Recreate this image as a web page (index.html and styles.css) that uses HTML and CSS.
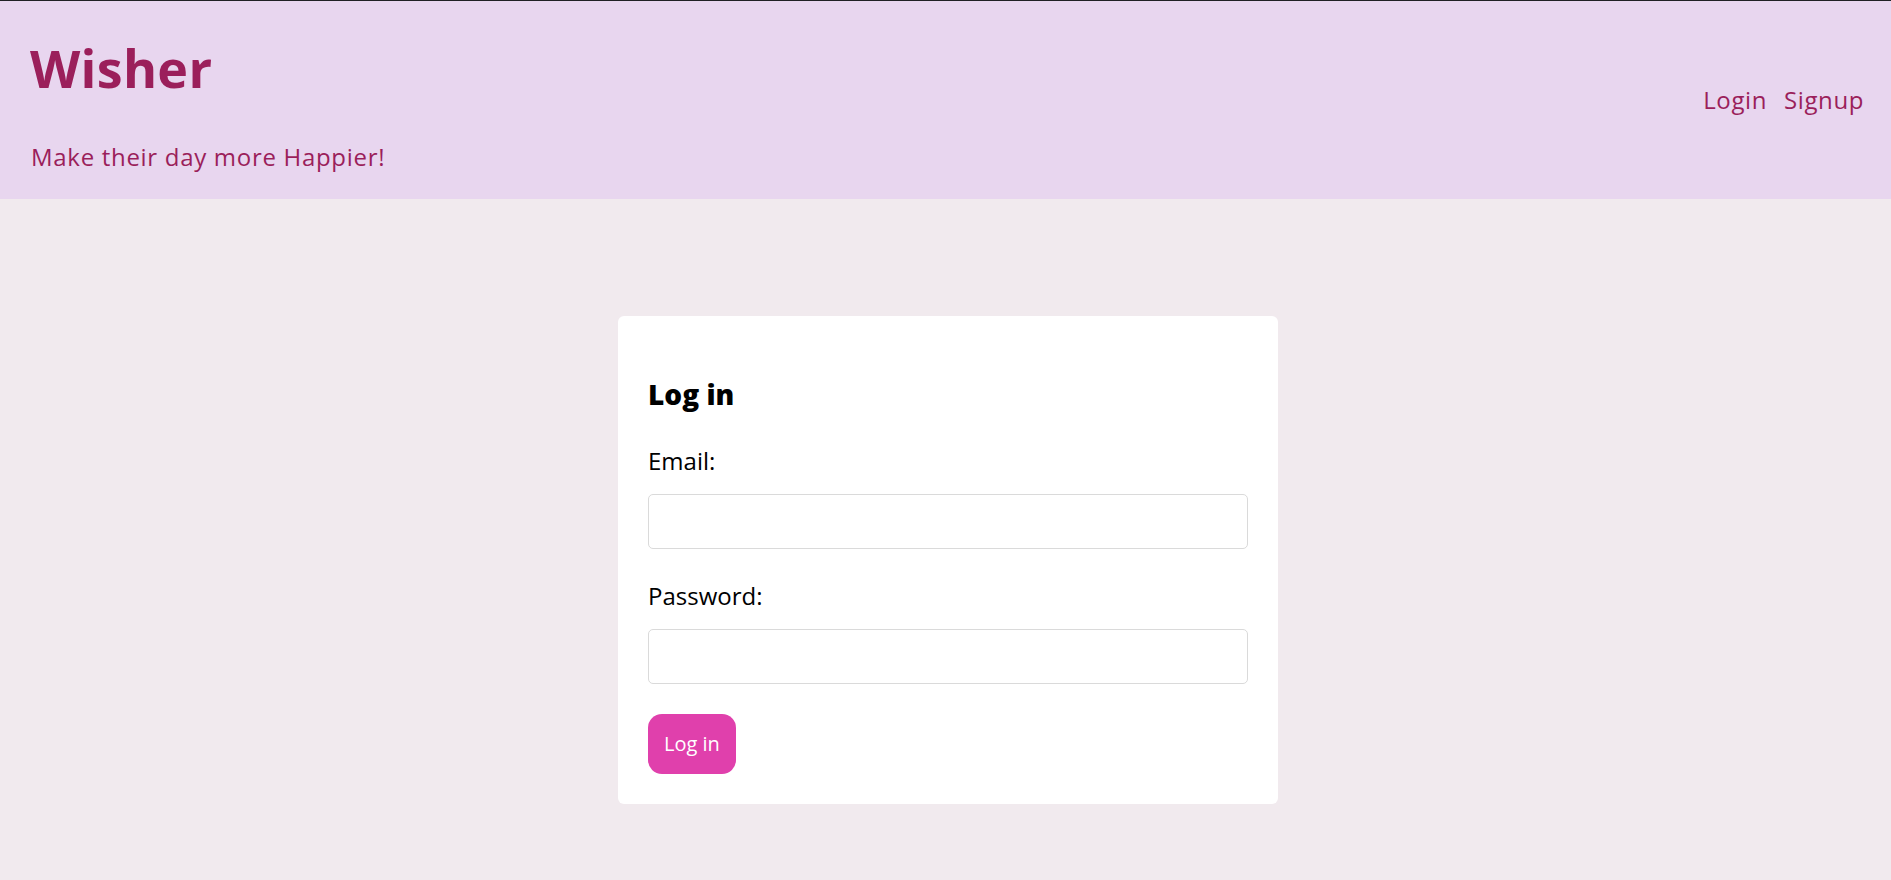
FILE: index.html
```html
<!DOCTYPE html>
<html lang="en">
<head>
<meta charset="utf-8">
<title>Wisher - Log in</title>
<link rel="stylesheet" href="styles.css">
</head>
<body>
<header class="site-header">
  <div class="brand">
    <h1 class="brand-title">Wisher</h1>
    <p class="brand-tagline">Make their day more Happier!</p>
  </div>
  <nav class="nav">
    <a class="nav-link" href="#">Login</a>
    <a class="nav-link" href="#">Signup</a>
  </nav>
</header>
<main class="main">
  <section class="card">
    <h2 class="card-title">Log in</h2>
    <form class="form">
      <label class="form-label" for="email">Email:</label>
      <input class="form-input" id="email" type="email">
      <label class="form-label form-label-second" for="password">Password:</label>
      <input class="form-input" id="password" type="password">
      <button class="btn" type="button">Log in</button>
    </form>
  </section>
</main>
</body>
</html>
```

FILE: styles.css
```css
* { box-sizing: border-box; }

html, body {
  margin: 0;
  padding: 0;
}

body {
  background: #f1eaee;
  font-family: "Open Sans", "Liberation Sans", sans-serif;
  color: #000;
  min-height: 880px;
  border-top: 1px solid #202124;
}

.site-header {
  background: #e8d6ef;
  height: 198px;
  display: flex;
  justify-content: space-between;
  align-items: flex-start;
  padding: 37px 27px 0 30px;
}

.brand {
  display: flex;
  flex-direction: column;
}

.brand-title {
  margin: 0;
  font-size: 52px;
  line-height: 60px;
  font-weight: 700;
  color: #9b1f5b;
  letter-spacing: 0.3px;
}

.brand-tagline {
  margin: 43px 0 0 1px;
  font-size: 24px;
  line-height: 32px;
  color: #9b1f5b;
  letter-spacing: 0.7px;
}

.nav {
  display: flex;
  gap: 17px;
  margin-top: 46px;
}

.nav-link {
  font-size: 24px;
  line-height: 32px;
  color: #9b1f5b;
  text-decoration: none;
  letter-spacing: 0.6px;
}

.main {
  display: flex;
  justify-content: center;
  padding: 117px 0 0 5px;
}

.card {
  width: 660px;
  background: #fff;
  border-radius: 6px;
  padding: 30px 30px 30px;
}

.card-title {
  margin: 30px 0 0;
  font-size: 28px;
  line-height: 36px;
  font-weight: 800;
  color: #000;
}

.form {
  display: flex;
  flex-direction: column;
  align-items: flex-start;
  margin-top: 33px;
}

.form-label {
  font-size: 24px;
  line-height: 32px;
  color: #000;
}

.form-label-second {
  margin-top: 31px;
}

.form-input {
  width: 100%;
  height: 55px;
  margin-top: 17px;
  border: 1px solid #dadada;
  border-radius: 5px;
  background: #fff;
  font-family: inherit;
  font-size: 20px;
}

.btn {
  margin-top: 30px;
  height: 60px;
  padding: 0 16px;
  border: none;
  border-radius: 14px;
  background: #e040ac;
  color: #fff;
  font-family: inherit;
  font-size: 20px;
  line-height: 1;
}
```
